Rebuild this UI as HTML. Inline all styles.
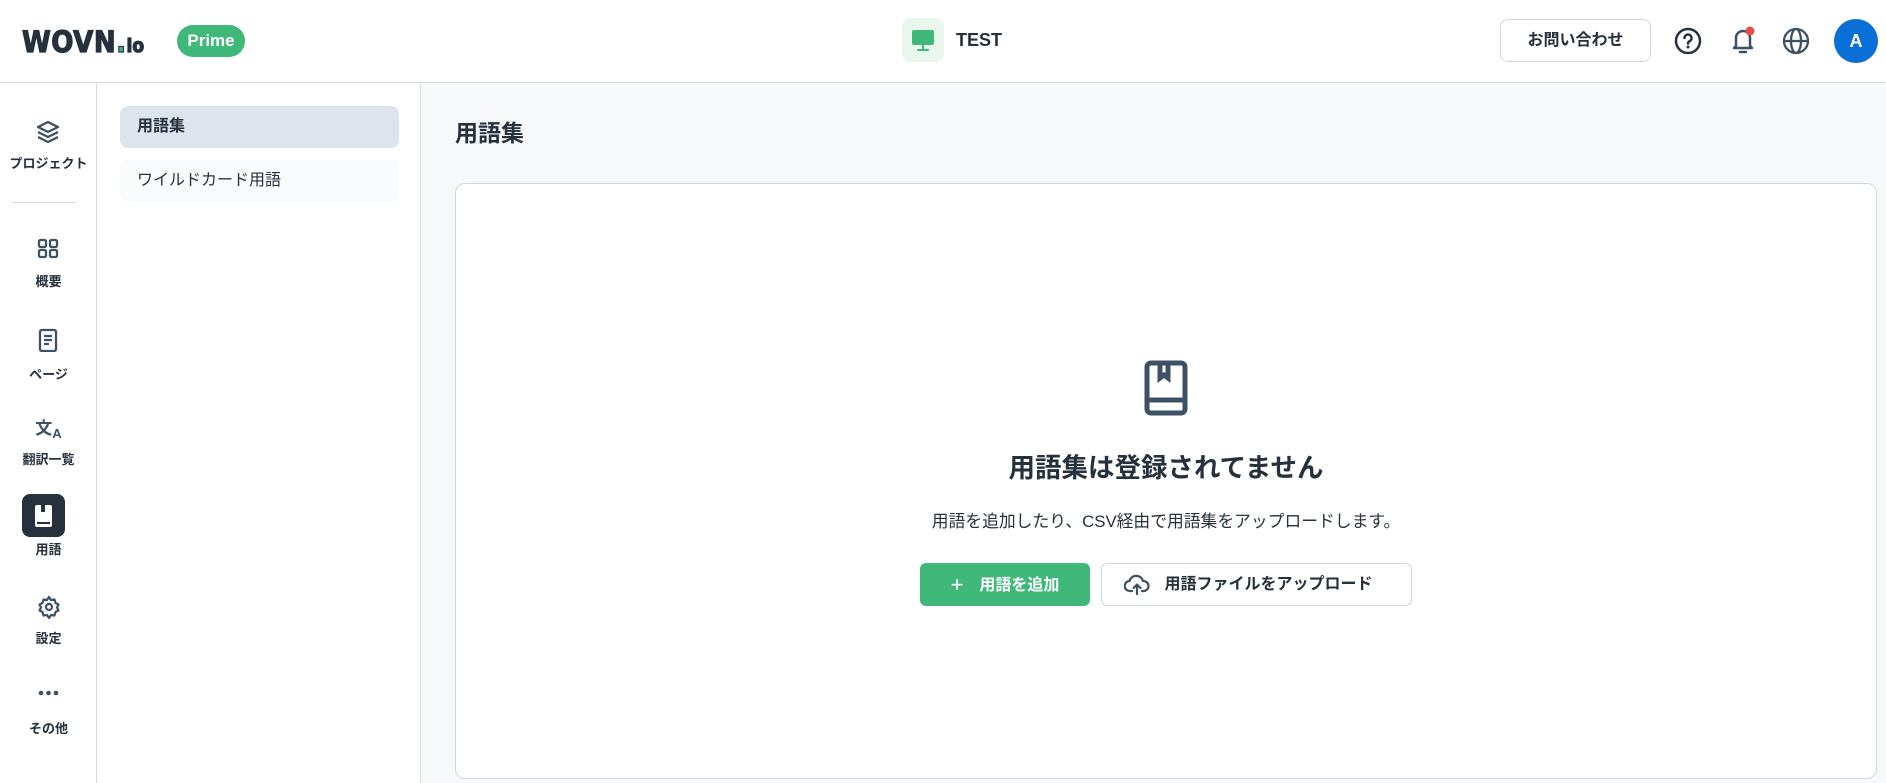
<!DOCTYPE html>
<html><head><meta charset="utf-8"><style>
*{box-sizing:border-box;margin:0;padding:0}
body{width:1886px;height:783px;overflow:hidden;background:#f7f8fa;font-family:"Liberation Sans","Noto Sans CJK JP",sans-serif;color:#26313d;position:relative}
.abs{position:absolute}
.hdr{left:0;top:0;width:1886px;height:83px;background:#fff;border-bottom:1px solid #d3d9e0}
.rail{left:0;top:83px;width:97px;height:700px;background:#fff;border-right:1px solid #d3d9e0}
.sub{left:97px;top:83px;width:324px;height:700px;background:#fff;border-right:1px solid #d3d9e0}
.ri{position:absolute;left:0;width:97px;text-align:center}
.lbl{position:absolute;left:0;width:97px;text-align:center;font-size:13px;font-weight:700;line-height:16px}
svg{display:block}
</style></head><body>
<div class="abs hdr">
  <div class="abs" style="left:22px;top:25px;font-size:29px;font-weight:700;letter-spacing:0.5px;color:#26313d;font-family:'DejaVu Sans',sans-serif;line-height:34px;transform:scaleX(0.9);transform-origin:left;-webkit-text-stroke:1.2px #26313d">WOVN<span style="color:#3fb87a">.</span><span style="font-size:19px;letter-spacing:0">io</span></div>
  <div class="abs" style="left:177px;top:25px;width:68px;height:32px;border-radius:16px;background:#3fb87a;color:#fff;font-weight:700;font-size:17px;line-height:32px;text-align:center">Prime</div>
  <div class="abs" style="left:902px;top:18px;width:42px;height:44px;border-radius:8px;background:#e9f7ef">
    <svg width="42" height="44" viewBox="0 0 42 44"><rect x="10" y="12" width="22" height="15" rx="2" fill="#3fb87a"/><rect x="20" y="27" width="2" height="4" fill="#3fb87a"/><rect x="15" y="31" width="12" height="2" rx="1" fill="#3fb87a"/></svg>
  </div>
  <div class="abs" style="left:956px;top:28px;font-size:18px;font-weight:700;line-height:24px">TEST</div>
  <div class="abs" style="left:1500px;top:19px;width:151px;height:43px;border:1px solid #cfd6de;border-radius:8px;font-size:16px;font-weight:700;line-height:41px;text-align:center">お問い合わせ</div>
  <svg class="abs" style="left:1674px;top:27px" width="28" height="28" viewBox="0 0 28 28"><circle cx="14" cy="14" r="12" fill="none" stroke="#26313d" stroke-width="2.5"/><path d="M10.5 11a3.5 3.5 0 1 1 5 3.2c-1 .5-1.5 1.2-1.5 2.3" fill="none" stroke="#26313d" stroke-width="2.5" stroke-linecap="round"/><circle cx="14" cy="20" r="1.5" fill="#26313d"/></svg>
  <svg class="abs" style="left:1728px;top:24px" width="30" height="32" viewBox="0 0 30 32"><path d="M8 22V14a7 7 0 0 1 14 0v8l2 2H6z" fill="none" stroke="#3d5066" stroke-width="2.5" stroke-linejoin="round"/><path d="M12 28h6" stroke="#3d5066" stroke-width="2.5" stroke-linecap="round"/><circle cx="22" cy="7" r="4.5" fill="#e84c4c"/></svg>
  <svg class="abs" style="left:1782px;top:27px" width="28" height="28" viewBox="0 0 28 28" fill="none" stroke="#3d5066" stroke-width="2.3"><circle cx="14" cy="14" r="12"/><ellipse cx="14" cy="14" rx="5" ry="12"/><path d="M2 14h24"/></svg>
  <div class="abs" style="left:1834px;top:19px;width:44px;height:44px;border-radius:50%;background:#0b6fd8;color:#fff;font-weight:700;font-size:18px;line-height:44px;text-align:center">A</div>
</div>
<div class="abs rail">
  <svg class="ri" style="top:36px" width="97" height="24" viewBox="0 0 97 24"><g fill="none" stroke="#3d5066" stroke-width="2.3" stroke-linejoin="round" transform="translate(37,1)"><path d="M11 2L21 7 11 12 1 7z"/><path d="M1 12l10 5 10-5"/><path d="M1 17l10 5 10-5"/></g></svg>
  <div class="lbl" style="top:73px">プロジェクト</div>
  <div class="abs" style="left:12px;top:119px;width:64px;height:1px;background:#d3d9e0"></div>
  <svg class="ri" style="top:154px" width="97" height="22" viewBox="0 0 97 22"><g fill="none" stroke="#3d5066" stroke-width="2.3" transform="translate(38,2)"><rect x="1" y="1" width="7" height="7" rx="1.5"/><rect x="12" y="1" width="7" height="7" rx="1.5"/><rect x="1" y="11" width="7" height="7" rx="1.5"/><rect x="12" y="11" width="7" height="7" rx="1.5"/></g></svg>
  <div class="lbl" style="top:191px">概要</div>
  <svg class="ri" style="top:245px" width="97" height="24" viewBox="0 0 97 24"><g fill="none" stroke="#3d5066" stroke-width="2.3" transform="translate(39,1)"><rect x="1" y="1" width="16" height="21" rx="2"/><path d="M5 7h8M5 11h8M5 15h5"/></g></svg>
  <div class="lbl" style="top:284px">ページ</div>
  <div class="ri" style="top:335px;font-size:17px;font-weight:700;color:#3d5066;line-height:22px">文<span style="font-size:13px;vertical-align:-4px">A</span></div>
  <div class="lbl" style="top:369px">翻訳一覧</div>
  <div class="abs" style="left:22px;top:411px;width:43px;height:43px;border-radius:8px;background:#26313d">
    <svg width="43" height="43" viewBox="0 0 43 43"><rect x="13" y="11" width="17" height="22" rx="2" fill="#fff"/><rect x="19" y="11" width="4" height="7" fill="#26313d"/><rect x="15" y="28" width="13" height="2" fill="#26313d"/></svg>
  </div>
  <div class="lbl" style="top:459px">用語</div>
  <svg class="ri" style="top:512px" width="97" height="24" viewBox="0 0 97 24"><g fill="none" stroke="#3d5066" stroke-width="2.2" transform="translate(37,0)"><path d="M12 2l2 3 3.5-.5 1 3.5 3 1.5-1.5 3 1.5 3-3 1.5-1 3.5-3.5-.5-2 3-2-3-3.5.5-1-3.5-3-1.5 1.5-3-1.5-3 3-1.5 1-3.5 3.5.5z" stroke-linejoin="round"/><circle cx="12" cy="12" r="3"/></g></svg>
  <div class="lbl" style="top:548px">設定</div>
  <svg class="ri" style="top:606px" width="97" height="8" viewBox="0 0 97 8"><g fill="#3d5066"><circle cx="41" cy="4" r="2.3"/><circle cx="48.5" cy="4" r="2.3"/><circle cx="56" cy="4" r="2.3"/></g></svg>
  <div class="lbl" style="top:638px">その他</div>
</div>
<div class="abs sub">
  <div class="abs" style="left:23px;top:23px;width:279px;height:42px;border-radius:8px;background:#dee4ec;font-size:16px;font-weight:700;line-height:42px;padding-left:17px">用語集</div>
  <div class="abs" style="left:23px;top:77px;width:279px;height:42px;border-radius:8px;background:#fafbfc;font-size:16px;line-height:42px;padding-left:17px">ワイルドカード用語</div>
</div>
<div class="abs" style="left:455px;top:118px;font-size:23px;font-weight:700;line-height:30px">用語集</div>
<div class="abs" style="left:455px;top:183px;width:1422px;height:596px;background:#fff;border:1px solid #cfd6de;border-radius:10px"></div>
<svg class="abs" style="left:1143px;top:360px" width="46" height="56" viewBox="0 0 46 56"><g fill="none" stroke="#3d5066" stroke-width="5"><rect x="4" y="3" width="38" height="50" rx="4"/><path d="M4 40h38"/><path d="M17 3v15l4-3 4 3V3"/></g></svg>
<div class="abs" style="left:455px;top:450px;width:1422px;text-align:center;font-size:26.5px;font-weight:700;line-height:36px">用語集は登録されてません</div>
<div class="abs" style="left:455px;top:510px;width:1422px;text-align:center;font-size:16.8px;line-height:24px">用語を追加したり、CSV経由で用語集をアップロードします。</div>
<div class="abs" style="left:920px;top:563px;width:170px;height:43px;border-radius:6px;background:#3fb87a;color:#fff;font-size:16px;font-weight:700;line-height:43px;text-align:center"><span style="font-size:22px;font-weight:400;vertical-align:-2px;margin-right:16px">+</span>用語を追加</div>
<div class="abs" style="left:1101px;top:563px;width:311px;height:43px;border-radius:6px;border:1px solid #cfd6de;background:#fff;font-size:16px;font-weight:700;line-height:41px;text-align:center;padding-left:24px">用語ファイルをアップロード
<svg class="abs" style="left:22px;top:10px" width="26" height="22" viewBox="0 0 26 22"><g fill="none" stroke="#3d5066" stroke-width="2.2" stroke-linecap="round" stroke-linejoin="round"><path d="M8 17H6a5 5 0 0 1-.5-10A7 7 0 0 1 19 7a5 5 0 0 1 1 10h-2"/><path d="M13 20v-9M9.5 14l3.5-3.5 3.5 3.5"/></g></svg></div>
</body></html>
